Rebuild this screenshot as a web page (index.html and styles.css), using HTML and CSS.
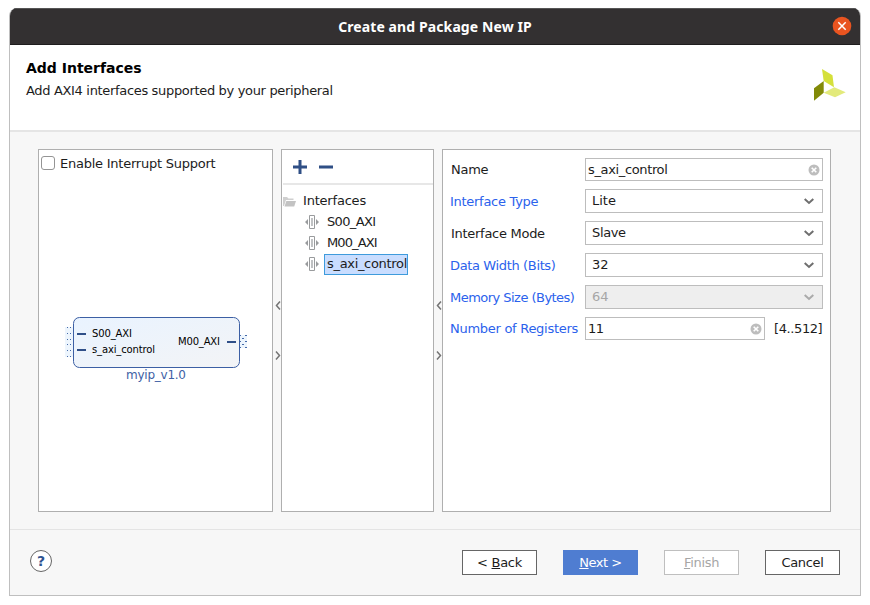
FILE: index.html
```html
<!DOCTYPE html>
<html lang="en">
<head>
<meta charset="utf-8">
<title>Create and Package New IP</title>
<link rel="stylesheet" href="styles.css">
</head>
<body>
<div class="window">
  <header class="titlebar">
    <span class="title">Create and Package New IP</span>
    <svg class="close" width="20" height="20" viewBox="0 0 20 20"><circle cx="10" cy="10" r="9.3" fill="#e95420"/><path d="M6.3 6.3l7.4 7.4M13.7 6.3l-7.4 7.4" stroke="#fff" stroke-width="1.5"/></svg>
  </header>
  <section class="banner">
    <div>
      <h1>Add Interfaces</h1>
      <p>Add AXI4 interfaces supported by your peripheral</p>
    </div>
    <svg class="logo" width="34" height="34" viewBox="0 0 34 34"><path d="M10 1L20.500 7.300 22 19.300 11.700 13z" fill="#d5e03a"/><path d="M2 20.300L11.700 13v11.700L2 32.700z" fill="#828a08"/><path d="M11.700 24.700L22.300 19.300l11.400 5L23 29.300z" fill="#e3ea7b"/></svg>
  </section>
  <main class="content">
    <section class="panel preview">
      <label class="check"><span class="box"></span><span class="check-text">Enable Interrupt Support</span></label>
      <svg class="diagram" width="233" height="90" viewBox="39 305 233 90">
        <defs><linearGradient id="fill" x1="0" y1="0" x2="1" y2="1"><stop offset="0" stop-color="#e9f3ff"/><stop offset="1" stop-color="#f3f4f6"/></linearGradient></defs>
        <path d="M65 327h8v30h-8zM240 335h7v13h-7z" fill="#edf5fd"/>
        <g stroke="#456aa9" fill="none">
          <path d="M67 327.500h5M67 333.500h5M67 339.500h5M67 344.500h5M67 350.500h5M67 356.500h5" stroke-dasharray="1 2"/>
          <path d="M240 335.500h1M245 335.500h2M242 338.500h2M240 341.500h1M245 341.500h2M242 344.500h2M240 347.500h1M245 347.500h2"/>
        </g>
        <rect x="73.500" y="317.500" width="166" height="50" rx="6" fill="url(#fill)" stroke="#3c5fa4"/>
        <path d="M77 334h9M77 350h9M227 342h9" stroke="#2f4f88" stroke-width="2"/>
        <g class="port"><text x="92" y="337" textLength="40">S00_AXI</text><text x="92" y="353" textLength="63">s_axi_control</text><text x="178" y="345" textLength="42">M00_AXI</text></g>
        <text class="ip-name" x="126" y="379" textLength="60">myip_v1.0</text>
      </svg>
    </section>
    <div class="splitter">
      <svg width="6" height="9" viewBox="0 0 6 9"><path d="M5 .5L1.500 4.500 5 8.500"/></svg>
      <svg width="6" height="9" viewBox="0 0 6 9"><path d="M1 .5l3.500 4L1 8.500"/></svg>
    </div>
    <section class="panel tree">
      <div class="toolbar">
        <svg width="42" height="16" viewBox="0 0 42 16"><path d="M1 8h14M8 1v14M27 8h14" stroke="#2f4f85" stroke-width="3"/></svg>
      </div>
      <div class="root"><svg width="13" height="11" viewBox="0 0 13 11"><path d="M0 10V1h4l1.500 1.500h5V4H3L1 10z" fill="#cfcfcf"/><path d="M3.300 5H13l-1.800 5.500H1.500z" fill="#c3c3c3"/></svg><span>Interfaces</span></div>
      <div class="node"><svg width="14" height="14" viewBox="0 0 14 14"><use href="#bus"/></svg><span>S00_AXI</span></div>
      <div class="node"><svg width="14" height="14" viewBox="0 0 14 14"><use href="#bus"/></svg><span class="master">M00_AXI</span></div>
      <div class="node"><svg width="14" height="14" viewBox="0 0 14 14"><g id="bus"><path d="M4.500.5h5v13h-5z" fill="#fff" stroke="#999b9d"/><path d="M6 3h2v8H6z" fill="#c0c2c4"/><path d="M0 7l3-3v6zM14 7l-3-3v6z" fill="#999b9d"/></g></svg><span class="selected">s_axi_control</span></div>
    </section>
    <div class="splitter">
      <svg width="6" height="9" viewBox="0 0 6 9"><path d="M5 .5L1.500 4.500 5 8.500"/></svg>
      <svg width="6" height="9" viewBox="0 0 6 9"><path d="M1 .5l3.500 4L1 8.500"/></svg>
    </div>
    <section class="panel form">
      <label class="plain">Name</label>
      <div class="field input"><span class="tight">s_axi_control</span><svg width="12" height="12" viewBox="0 0 12 12"><g id="clear"><circle cx="6" cy="6" r="5.500" fill="#bdbdbd"/><path d="M3.700 3.700l4.600 4.600M8.300 3.700L3.700 8.300" stroke="#fff" stroke-width="1.600"/></g></svg></div>
      <label>Interface Type</label>
      <div class="field select"><span>Lite</span><svg width="10" height="7" viewBox="0 0 10 7"><path d="M.7 1L5 5l4.300-4"/></svg></div>
      <label class="plain">Interface Mode</label>
      <div class="field select"><span class="tight">Slave</span><svg width="10" height="7" viewBox="0 0 10 7"><path d="M.7 1L5 5l4.300-4"/></svg></div>
      <label class="tight">Data Width (Bits)</label>
      <div class="field select"><span>32</span><svg width="10" height="7" viewBox="0 0 10 7"><path d="M.7 1L5 5l4.300-4"/></svg></div>
      <label class="tighter">Memory Size (Bytes)</label>
      <div class="field select disabled"><span>64</span><svg width="10" height="7" viewBox="0 0 10 7"><path d="M.7 1L5 5l4.300-4"/></svg></div>
      <label>Number of Registers</label>
      <div class="ranged"><div class="field input"><span class="tighter">11</span><svg width="12" height="12" viewBox="0 0 12 12"><use href="#clear"/></svg></div><span class="range">[4..512]</span></div>
    </section>
  </main>
  <footer class="footer">
    <div class="help">?</div>
    <div class="buttons">
      <div class="btn"><span>&lt; <u>B</u>ack</span></div>
      <div class="btn primary"><span><u>N</u>ext &gt;</span></div>
      <div class="btn off"><span><u>F</u>inish</span></div>
      <div class="btn"><span>Cancel</span></div>
    </div>
  </footer>
</div>
</body>
</html>
```
FILE: styles.css
```css
* { box-sizing: border-box; }
body {
  margin: 0;
  padding: 8px 9px 0;
  background: #fff;
  color: #1c1c1c;
  font: 13px/16px "DejaVu Sans", sans-serif;
}
svg { display: block; flex: none; }
.window {
  width: 852px;
  height: 588px;
  display: flex;
  flex-direction: column;
  border: 1px solid #bfbfbf;
  border-top: 0;
  border-radius: 8px 8px 0 0;
  background: #f7f7f7;
  overflow: hidden;
}
.titlebar {
  height: 37px;
  display: grid;
  grid-template-columns: 1fr auto 1fr;
  align-items: center;
  padding-right: 8px;
  background: #333031;
  border-top: 1px solid #555;
  border-bottom: 1px solid #1f1d1e;
}
.title {
  grid-column: 2;
  padding: 2px 0 0 8px;
  color: #fff;
  font: bold 14px/20px "Noto Sans", sans-serif;
  letter-spacing: 0.1px;
}
.close { justify-self: end; }
.banner {
  height: 87px;
  display: flex;
  justify-content: space-between;
  padding: 14px 14px 0 16px;
  background: #fff;
  border-bottom: 2px solid #e5e5e5;
}
h1 { margin: 1px 0 7px; font-size: 14px; line-height: 16px; color: #000; }
p { margin: 0; letter-spacing: -0.33px; }
.logo { margin-top: 9px; }
.content { display: flex; height: 398px; padding: 17px 0 0 28px; }
.panel { height: 363px; border: 1px solid #afafaf; background: #fff; }
.preview { width: 235px; }
.check { display: flex; align-items: center; gap: 5px; padding: 6px 0 0 2px; height: 21px; }
.check-text { padding-top: 2px; letter-spacing: -0.24px; }
.box { width: 14px; height: 14px; border: 1px solid #949494; border-radius: 3px; }
.diagram { margin-top: 134px; }
.port { font-size: 10px; fill: #000; }
.ip-name { font-size: 12px; fill: #4061a5; }
.splitter {
  width: 8px;
  height: 363px;
  display: flex;
  flex-direction: column;
  align-items: center;
  gap: 41px;
  padding: 152px 0 0 2px;
  fill: none;
  stroke: #747474;
  stroke-width: 1.5;
}
.tree { width: 153px; }
.toolbar { height: 35px; padding: 9px 0 0 9px; margin-left: 1px; border-bottom: 2px solid #e7e7e7; }
.root { display: flex; align-items: center; height: 21px; margin-top: 6px; gap: 7px; padding-left: 1px; letter-spacing: -0.2px; }
.node { display: flex; align-items: center; height: 21px; padding-left: 23px; gap: 5px; }
.node span { height: 21px; padding: 0 0 0 2px; border: 1px solid transparent; line-height: 18px; letter-spacing: -0.65px; }
.node .master { letter-spacing: -0.9px; }
.node .selected { width: 84px; background: #c9ddff; border-color: #3e9bdc; white-space: nowrap; letter-spacing: -0.32px; }
.form {
  width: 389px;
  display: grid;
  grid-template-columns: 135px 238px;
  grid-template-rows: 23px repeat(4, 24px) 23px;
  row-gap: 8px;
  align-content: start;
  align-items: center;
  padding: 8px 0 0 7px;
}
.form label { padding-top: 2px; color: #2b62ec; white-space: nowrap; letter-spacing: -0.28px; }
.form .plain { color: #1c1c1c; padding-left: 1px; }
.form .tight { letter-spacing: -0.36px; }
.form .tighter { letter-spacing: -0.53px; }
.field {
  height: 24px;
  display: flex;
  align-items: center;
  justify-content: space-between;
  border: 1px solid #bdbdbd;
  padding: 1px 8px 0 6px;
}
.input { height: 23px; padding: 1px 2px 0 2px; }
.select svg { fill: none; stroke: #6f6f6f; stroke-width: 2; }
.disabled { background: #eee; color: #a6a6a6; }
.form .disabled svg { stroke: #aaa; }
.ranged { display: flex; align-items: center; gap: 9px; }
.ranged .field { width: 180px; flex: none; }
.range { padding-top: 2px; letter-spacing: -0.4px; }
.footer {
  height: 66px;
  display: flex;
  justify-content: space-between;
  padding: 20px 20px 0;
  border-top: 1px solid #e4e4e4;
}
.help {
  width: 22px;
  height: 22px;
  border: 1px solid #666;
  border-radius: 50%;
  background: #fff;
  color: #2f5390;
  font-weight: bold;
  font-size: 14px;
  line-height: 21px;
  text-align: center;
}
.buttons { display: flex; gap: 26px; }
.btn {
  width: 75px;
  height: 25px;
  border: 1px solid #666;
  background: #fff;
  line-height: 23px;
  text-align: center;
  letter-spacing: -0.3px;
}
.primary { background: #4f7dd1; border-color: #4f7dd1; color: #fff; letter-spacing: -0.5px; }
.off { border-color: #bfbfbf; color: #a6a6a6; }
```
